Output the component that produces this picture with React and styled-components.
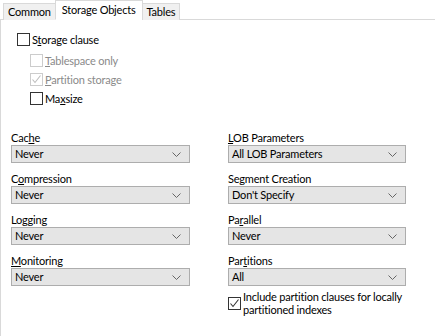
import React from 'react'
import styled, { createGlobalStyle } from 'styled-components'

const GlobalStyle = createGlobalStyle`
    html, body {
        margin: 0;
        padding: 0;
        background: #fff;
    }
    body {
        font-family: Lato, "Liberation Sans", sans-serif;
        font-size: 11px;
        letter-spacing: -0.2px;
        color: #000;
    }
`

const Page = styled.div`
    width: 435px;
    height: 336px;
    overflow: hidden;
    background: #fff;
    display: flex;
    flex-direction: column;
`
const TabStrip = styled.div`
    display: flex;
    align-items: flex-end;
    height: 20px;
    padding-left: 3px;
    position: relative;
    z-index: 1;
`
const Tab = styled.div`
    height: ${p => (p.$active ? '20px' : '17px')};
    padding: 0 ${p => (p.$active ? '6px' : '4px')};
    margin: 0 ${p => (p.$active ? '-1px' : '0')};
    box-sizing: border-box;
    border: 1px solid #d9d9d9;
    border-bottom: ${p => (p.$active ? '1px solid #fff' : 'none')};
    background: ${p => (p.$active ? '#fff' : '#f0f0f0')};
    display: flex;
    align-items: center;
    line-height: 14px;
    white-space: nowrap;
`
const Panel = styled.div`
    flex: 1;
    margin-top: -1px;
    border-top: 1px solid #d9d9d9;
    border-left: 1px solid #d9d9d9;
    padding: 13px 0 0 10px;
    display: flex;
    flex-direction: column;
`
const CheckGroup = styled.div`
    display: flex;
    flex-direction: column;
    gap: 6px;
    padding-left: ${p => p.$indent || 0}px;
    margin-top: ${p => p.$mt || 0}px;
`
const CheckRow = styled.label`
    display: flex;
    align-items: ${p => (p.$top ? 'flex-start' : 'center')};
    gap: 2px;
    height: ${p => (p.$top ? 'auto' : '13px')};
    color: ${p => (p.$disabled ? '#8a8a8a' : '#000')};
    line-height: 13px;
    white-space: nowrap;
`
const Box = styled.span`
    width: 13px;
    height: 13px;
    box-sizing: border-box;
    border: 1px solid ${p => (p.$disabled ? '#cccccc' : '#333')};
    background: #fff;
    flex-shrink: 0;
    display: flex;
    align-items: center;
    justify-content: center;
    margin-top: ${p => (p.$top ? '7px' : '0')};
    svg {
        display: block;
    }
`
const Key = styled.span`
    text-decoration: underline;
    text-underline-offset: 1px;
`
const Grid = styled.div`
    display: grid;
    grid-template-columns: 179px 178px;
    column-gap: 38px;
    margin-top: 26px;
`
const Column = styled.div`
    display: flex;
    flex-direction: column;
`
const Field = styled.div`
    display: flex;
    flex-direction: column;
    margin-bottom: ${p => p.$mb ?? 9}px;
`
const Label = styled.div`
    line-height: 14px;
    height: 14px;
`
const Select = styled.div`
    height: 18px;
    box-sizing: border-box;
    border: 1px solid #adadad;
    background: #e5e5e5;
    display: flex;
    align-items: center;
    justify-content: space-between;
    padding: 0 8px 0 3px;
    line-height: 14px;
`
const Chevron = () => (
    <svg width="9" height="5" viewBox="0 0 9 5">
        <path d="M0.5 0.5 L4.5 4.5 L8.5 0.5" fill="none" stroke="#666" strokeWidth="1" />
    </svg>
)

const Check = ({ color }) => (
    <svg width="11" height="11" viewBox="0 0 11 11">
        <path d="M1.5 5.5 L4 8.5 L9.5 1.5" fill="none" stroke={color} strokeWidth="1.1" />
    </svg>
)

function Dropdown({ label, value, mb }) {
    return (
        <Field $mb={mb}>
            <Label>{label}</Label>
            <Select>
                <span>{value}</span>
                <Chevron />
            </Select>
        </Field>
    )
}

export default function App() {
    return (
        <Page>
            <GlobalStyle />
            <TabStrip>
                <Tab>Common</Tab>
                <Tab $active>Storage Objects</Tab>
                <Tab>Tables</Tab>
            </TabStrip>
            <Panel>
                <CheckGroup $indent={6}>
                    <CheckRow>
                        <Box />
                        <span>S<Key>t</Key>orage clause</span>
                    </CheckRow>
                </CheckGroup>
                <CheckGroup $indent={19} $mt={8}>
                    <CheckRow $disabled>
                        <Box $disabled />
                        <span><Key>T</Key>ablespace only</span>
                    </CheckRow>
                    <CheckRow $disabled>
                        <Box $disabled><Check color="#bdbdbd" /></Box>
                        <span><Key>P</Key>artition storage</span>
                    </CheckRow>
                    <CheckRow>
                        <Box />
                        <span>Ma<Key>x</Key>size</span>
                    </CheckRow>
                </CheckGroup>
                <Grid>
                    <Column>
                        <Dropdown label={<>Cac<Key>h</Key>e</>} value="Never" />
                        <Dropdown label={<>C<Key>o</Key>mpression</>} value="Never" />
                        <Dropdown label={<>Lo<Key>g</Key>ging</>} value="Never" />
                        <Dropdown label={<><Key>M</Key>onitoring</>} value="Never" />
                    </Column>
                    <Column>
                        <Dropdown label={<><Key>L</Key>OB Parameters</>} value="All LOB Parameters" />
                        <Dropdown label="Segment Creation" value="Don't Specify" />
                        <Dropdown label={<>Pa<Key>r</Key>allel</>} value="Never" />
                        <Dropdown label={<>Par<Key>t</Key>itions</>} value="All" mb={4} />
                        <CheckRow $top>
                            <Box $top><Check color="#333" /></Box>
                            <span>Include partition clauses for locally<br />partitioned indexes</span>
                        </CheckRow>
                    </Column>
                </Grid>
            </Panel>
        </Page>
    )
}
